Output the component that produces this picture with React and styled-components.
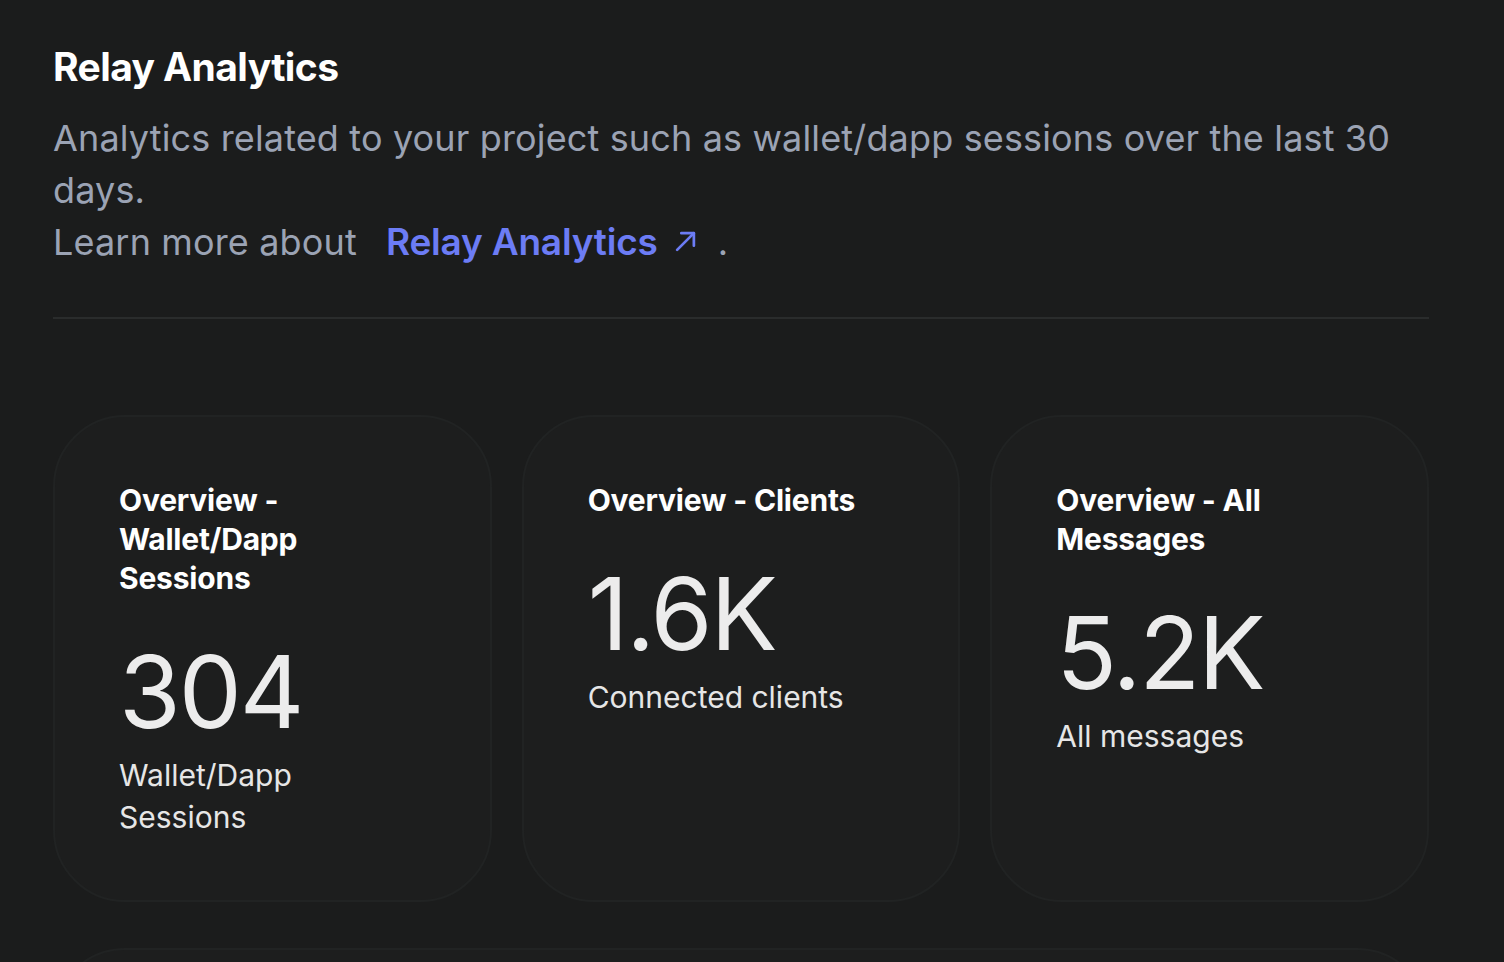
import React from 'react';
import styled, { createGlobalStyle } from 'styled-components';

const GlobalStyle = createGlobalStyle`
  html, body {
    margin: 0;
    padding: 0;
    background: #1b1c1c;
  }
  body {
    font-family: Inter, "Noto Sans", sans-serif;
    -webkit-font-smoothing: antialiased;
  }
`;

const Page = styled.main`
  width: 1376px;
  padding: 45px 75px 0 53px;
  box-sizing: content-box;
  height: 917px;
  overflow: hidden;
`;

const Title = styled.h1`
  margin: 0;
  font-size: 39px;
  line-height: 44px;
  font-weight: 700;
  color: #ffffff;
  letter-spacing: -0.6px;
`;

const Description = styled.p`
  margin: 24px 0 0;
  font-size: 36px;
  line-height: 51.5px;
  font-weight: 400;
  color: #9ba3b4;
  letter-spacing: 0.15px;
`;

const Learn = styled.span`
  display: block;
`;

const Link = styled.a`
  display: inline-flex;
  align-items: center;
  gap: 16px;
  margin-left: 29px;
  color: #6c7cf5;
  font-weight: 600;
  font-size: 37px;
  text-decoration: none;
  letter-spacing: -0.2px;
`;

const Dot = styled.span`
  margin-left: 21px;
`;

const Divider = styled.hr`
  margin: 48px 0 0;
  border: none;
  height: 2px;
  background: #2a2c2c;
`;

const Grid = styled.section`
  display: grid;
  grid-template-columns: repeat(3, 1fr);
  gap: 30px;
  margin-top: 96px;
`;

const Card = styled.div`
  height: 487px;
  box-sizing: border-box;
  padding: 64px 80px 64px 64px;
  border: 2px solid #212323;
  border-radius: 72px;
  background: #1d1e1e;
  display: flex;
  flex-direction: column;
  align-items: flex-start;
`;

const WideCard = styled(Card)`
  margin-top: 46px;
  height: 400px;
`;

const CardTitle = styled.h3`
  margin: 0;
  font-size: 30px;
  line-height: 39px;
  font-weight: 700;
  color: #ffffff;
  letter-spacing: -0.2px;
`;

const Value = styled.div`
  margin-top: 44px;
  font-size: 100px;
  line-height: 100px;
  font-weight: 400;
  color: #ececec;
  letter-spacing: -2px;
`;

const Label = styled.div`
  margin-top: 12px;
  font-size: 30px;
  line-height: 42px;
  font-weight: 400;
  color: #e6e6e6;
`;

const ArrowIcon = () => (
  <svg width="23" height="23" viewBox="0 0 22 22" fill="none" stroke="currentColor" strokeWidth="2.6" strokeLinecap="round" strokeLinejoin="round">
    <path d="M3 19L19 3" />
    <path d="M7 3H19V15" />
  </svg>
);

const stats = [
  { title: 'Overview - Wallet/Dapp Sessions', value: '304', label: 'Wallet/Dapp Sessions' },
  { title: 'Overview - Clients', value: '1.6K', label: 'Connected clients' },
  { title: 'Overview - All Messages', value: '5.2K', label: 'All messages' },
];

export default function App() {
  return (
    <>
      <GlobalStyle />
      <Page>
        <Title>Relay Analytics</Title>
        <Description>
          Analytics related to your project such as wallet/dapp sessions over the last 30 days.
          <Learn>
            Learn more about
            <Link href="#">
              Relay Analytics
              <ArrowIcon />
            </Link>
            <Dot>.</Dot>
          </Learn>
        </Description>
        <Divider />
        <Grid>
          {stats.map((s) => (
            <Card key={s.title}>
              <CardTitle>{s.title}</CardTitle>
              <Value>{s.value}</Value>
              <Label>{s.label}</Label>
            </Card>
          ))}
        </Grid>
        <WideCard />
      </Page>
    </>
  );
}
